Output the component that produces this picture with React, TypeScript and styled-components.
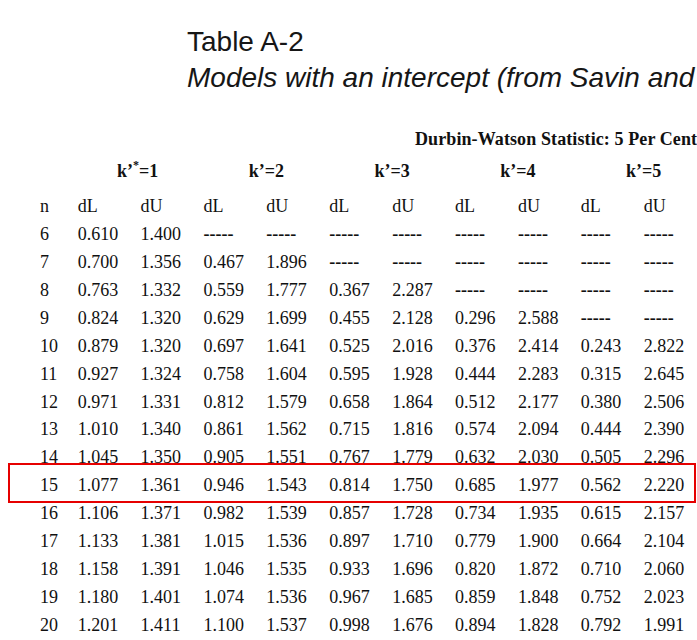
import React from "react";
import styled, { createGlobalStyle } from "styled-components";

const Global = createGlobalStyle`
  html, body { margin: 0; padding: 0; background: #fff; }
  body { width: 697px; height: 640px; overflow: hidden; }
`;

const Page = styled.div`
  position: relative;
  width: 697px;
  height: 640px;
  overflow: hidden;
  padding-top: 24px;
  box-sizing: border-box;
  color: #111;
`;

const TitleBlock = styled.div`
  padding-left: 187px;
  font-family: "Liberation Sans", Arial, sans-serif;
  font-size: 28px;
  line-height: 36px;
  white-space: nowrap;
  color: #161616;
`;

const Title = styled.div``;
const Subtitle = styled.div`
  font-style: italic;
`;

const Caption = styled.div`
  margin-top: 33px;
  padding-left: 415px;
  font-family: "Liberation Serif", "Times New Roman", serif;
  font-weight: bold;
  font-size: 18px;
  letter-spacing: 0.1px;
  line-height: 20px;
  white-space: nowrap;
`;

const Table = styled.div`
  margin-top: 9.25px;
  margin-left: 40px;
  display: flex;
  flex-direction: column;
  font-family: "Liberation Serif", "Times New Roman", serif;
  font-size: 18px;
  line-height: 27.93px;
  white-space: nowrap;
`;

const Row = styled.div<{ $head?: boolean }>`
  display: grid;
  grid-template-columns: 37.7px repeat(10, 62.9px);
  height: ${(p) => (p.$head ? "34.8px" : "27.93px")};
`;

const GroupHead = styled.div<{ $start: number }>`
  grid-column: ${(p) => p.$start} / span 2;
  text-align: center;
  font-weight: bold;
  padding-right: ${(p) => (p.$start === 2 ? "6px" : "0")};
`;

const Sup = styled.span`
  display: inline-block;
  font-size: 12px;
  line-height: 0;
  vertical-align: 8px;
`;

const Cell = styled.div<{ $dash?: boolean }>`
  font-weight: ${(p) => (p.$dash ? "bold" : "normal")};
`;

const Highlight = styled.div`
  position: absolute;
  left: 8px;
  top: 463px;
  width: 688px;
  height: 40px;
  box-sizing: border-box;
  border: 2px solid #e60000;
  pointer-events: none;
`;

const D = "-----";
const rows: string[][] = [
  ["6", "0.610", "1.400", D, D, D, D, D, D, D, D],
  ["7", "0.700", "1.356", "0.467", "1.896", D, D, D, D, D, D],
  ["8", "0.763", "1.332", "0.559", "1.777", "0.367", "2.287", D, D, D, D],
  ["9", "0.824", "1.320", "0.629", "1.699", "0.455", "2.128", "0.296", "2.588", D, D],
  ["10", "0.879", "1.320", "0.697", "1.641", "0.525", "2.016", "0.376", "2.414", "0.243", "2.822"],
  ["11", "0.927", "1.324", "0.758", "1.604", "0.595", "1.928", "0.444", "2.283", "0.315", "2.645"],
  ["12", "0.971", "1.331", "0.812", "1.579", "0.658", "1.864", "0.512", "2.177", "0.380", "2.506"],
  ["13", "1.010", "1.340", "0.861", "1.562", "0.715", "1.816", "0.574", "2.094", "0.444", "2.390"],
  ["14", "1.045", "1.350", "0.905", "1.551", "0.767", "1.779", "0.632", "2.030", "0.505", "2.296"],
  ["15", "1.077", "1.361", "0.946", "1.543", "0.814", "1.750", "0.685", "1.977", "0.562", "2.220"],
  ["16", "1.106", "1.371", "0.982", "1.539", "0.857", "1.728", "0.734", "1.935", "0.615", "2.157"],
  ["17", "1.133", "1.381", "1.015", "1.536", "0.897", "1.710", "0.779", "1.900", "0.664", "2.104"],
  ["18", "1.158", "1.391", "1.046", "1.535", "0.933", "1.696", "0.820", "1.872", "0.710", "2.060"],
  ["19", "1.180", "1.401", "1.074", "1.536", "0.967", "1.685", "0.859", "1.848", "0.752", "2.023"],
  ["20", "1.201", "1.411", "1.100", "1.537", "0.998", "1.676", "0.894", "1.828", "0.792", "1.991"],
];

const sub = ["n", "dL", "dU", "dL", "dU", "dL", "dU", "dL", "dU", "dL", "dU"];

export default function App() {
  return (
    <>
      <Global />
      <Page>
        <TitleBlock>
          <Title>Table A-2</Title>
          <Subtitle>Models with an intercept (from Savin and</Subtitle>
        </TitleBlock>
        <Caption>Durbin-Watson Statistic: 5 Per Cent</Caption>
        <Table>
          <Row $head>
            <GroupHead $start={2}>
              k’<Sup>*</Sup>=1
            </GroupHead>
            <GroupHead $start={4}>k’=2</GroupHead>
            <GroupHead $start={6}>k’=3</GroupHead>
            <GroupHead $start={8}>k’=4</GroupHead>
            <GroupHead $start={10}>k’=5</GroupHead>
          </Row>
          <Row>
            {sub.map((s, i) => (
              <Cell key={"s" + i}>{s}</Cell>
            ))}
          </Row>
          {rows.map((r) => (
            <Row key={r[0]}>
              {r.map((v, i) => (
                <Cell key={i} $dash={v === D}>
                  {v}
                </Cell>
              ))}
            </Row>
          ))}
        </Table>
        <Highlight />
      </Page>
    </>
  );
}
